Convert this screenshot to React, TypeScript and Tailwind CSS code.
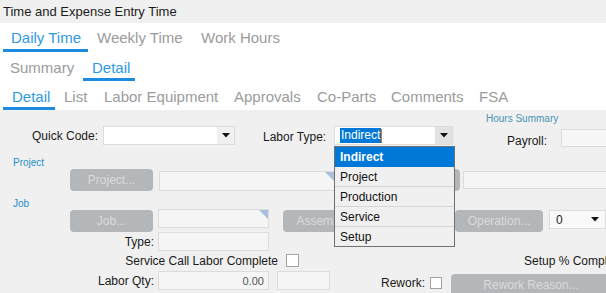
import React from "react";

const font = { fontFamily: '"Liberation Sans", Arial, sans-serif' };

function Arrow() {
  return (
    <svg width="8" height="5" viewBox="0 0 8 5">
      <path d="M0 0 L8 0 L4 4.5 Z" fill="#111" />
    </svg>
  );
}

function GrayButton({ label, className }: { label: string; className: string }) {
  return (
    <div
      className={
        "flex items-center justify-center overflow-hidden rounded-[4px] bg-[#b4b7ba] text-[12px] text-[#d9dbdd] shrink-0 " +
        className
      }
    >
      {label}
    </div>
  );
}

function Field({ className, children }: { className: string; children?: React.ReactNode }) {
  return (
    <div className={"relative shrink-0 border border-[#dcdcdc] bg-[#f5f5f5] " + className}>{children}</div>
  );
}

function Corner() {
  return (
    <svg className="absolute right-0 top-0" width="9" height="9" viewBox="0 0 9 9">
      <path d="M0 0 L9 0 L9 9 Z" fill="#a9c1dd" />
    </svg>
  );
}

function CheckBox({ className }: { className: string }) {
  return <div className={"shrink-0 border border-[#a3a3a3] bg-white " + className} />;
}

export default function App() {
  const active = "shrink-0 text-[#2e99e6] border-b-[3px] border-[#1c8be0]";
  const idle = "shrink-0 text-[#9b9b9b] border-b-[3px] border-transparent";
  return (
    <div className="w-[606px] h-[293px] overflow-hidden bg-white relative text-[#1a1a1a]" style={font}>
      {/* Title */}
      <div className="h-[23px] bg-[#f0f0f0] flex items-center pl-[3px] text-[13px] text-[#1c1c1c]">
        Time and Expense Entry Time
      </div>

      {/* Tabs */}
      <div className="text-[15px] leading-[18px]">
        <div className="flex ml-[3px] whitespace-nowrap">
          <div className={"pt-[6px] pb-[2px] pl-[8px] w-[85px] " + active}>Daily Time</div>
          <div className={"pt-[6px] pb-[2px] pl-[9px] w-[104px] " + idle}>Weekly Time</div>
          <div className={"pt-[6px] pb-[2px] pl-[9px] " + idle}>Work Hours</div>
        </div>
        <div className="flex ml-[1px] whitespace-nowrap">
          <div className={"pt-[7px] pb-[1px] pl-[9px] w-[82px] " + idle}>Summary</div>
          <div className={"pt-[7px] pb-[1px] pl-[9px] w-[52px] " + active}>Detail</div>
        </div>
        <div className="flex ml-[3px] whitespace-nowrap">
          <div className={"pt-[7px] pb-[1px] pl-[9px] w-[52px] " + active}>Detail</div>
          <div className={"pt-[7px] pb-[1px] pl-[9px] w-[40px] " + idle}>List</div>
          <div className={"pt-[7px] pb-[1px] pl-[9px] w-[130px] " + idle}>Labor Equipment</div>
          <div className={"pt-[7px] pb-[1px] pl-[9px] w-[83px] " + idle}>Approvals</div>
          <div className={"pt-[7px] pb-[1px] pl-[9px] w-[74px] " + idle}>Co-Parts</div>
          <div className={"pt-[7px] pb-[1px] pl-[9px] w-[88px] " + idle}>Comments</div>
          <div className={"pt-[7px] pb-[1px] pl-[9px] " + idle}>FSA</div>
        </div>
      </div>

      {/* Form */}
      <div className="bg-[#f0f0f0] h-[183px] text-[12px] leading-[14px] whitespace-nowrap">
        {/* Row 1 */}
        <div className="flex items-start h-[40px]">
          <div className="mt-[16px] flex items-center shrink-0">
            <div className="w-[98px] text-right shrink-0">Quick Code:</div>
            <div className="ml-[5px] w-[132px] h-[19px] bg-white border border-[#dcdcdc] flex justify-end shrink-0">
              <div className="w-[17px] h-full bg-[#f0f0f0] flex items-center justify-center">
                <Arrow />
              </div>
            </div>
          </div>
          <div className="mt-[16px] ml-[28px] flex items-start shrink-0">
            <div className="w-[71px] mt-[4px] shrink-0">Labor Type:</div>
            <div className="w-[119px] h-[19px] bg-white border border-[#dcdcdc] flex items-center justify-between shrink-0">
              <div className="flex items-center ml-[5px]">
                <span className="bg-[#0078d7] text-white px-[1px] leading-[15px]">Indirect</span>
                <span className="w-[1px] h-[14px] bg-[#e07020]" />
              </div>
              <div className="w-[17px] h-full bg-[#e2e2e2] flex items-center justify-center">
                <Arrow />
              </div>
            </div>
          </div>
          <div className="ml-[33px] flex flex-col shrink-0">
            <div className="mt-[3px] text-[10px] leading-[12px] text-[#4793b5]">Hours Summary</div>
            <div className="mt-[4px] flex items-start">
              <div className="ml-[21px] w-[54px] mt-[5px] shrink-0">Payroll:</div>
              <div className="w-[50px] h-[18px] bg-[#f7f7f7] border border-[#dcdcdc] shrink-0" />
            </div>
          </div>
        </div>

        {/* Project label */}
        <div className="h-[19px] pt-[7px] pl-[13px] text-[10px] leading-[12px] text-[#1f8fc7]">Project</div>
        {/* Project row */}
        <div className="flex items-start h-[22px]">
          <GrayButton label="Project..." className="ml-[70px] w-[83px] h-[22px]" />
          <Field className="ml-[6px] mt-[2px] w-[176px] h-[20px]">
            <Corner />
          </Field>
          <GrayButton label="Assembly..." className="ml-[37px] w-[88px] h-[22px]" />
          <Field className="ml-[3px] mt-[2px] h-[18px] w-[150px]" />
        </div>

        {/* Job label */}
        <div className="h-[19px] pt-[7px] pl-[13px] text-[10px] leading-[12px] text-[#1f8fc7]">Job</div>
        {/* Job row */}
        <div className="flex items-start h-[22px]">
          <GrayButton label="Job..." className="ml-[70px] w-[83px] h-[22px]" />
          <Field className="ml-[5px] -mt-[1px] w-[111px] h-[19px]">
            <Corner />
          </Field>
          <GrayButton label="Assembly..." className="ml-[14px] w-[88px] h-[22px]" />
          <GrayButton label="Operation..." className="ml-[84px] w-[88px] h-[22px]" />
          <div className="ml-[6px] w-[57px] h-[19px] shrink-0 bg-[#f9f9f9] border border-[#dcdcdc] flex items-center justify-between pl-[6px] pr-[6px]">
            <span>0</span>
            <Arrow />
          </div>
        </div>

        {/* Type row */}
        <div className="flex items-center h-[19px]">
          <div className="w-[154px] text-right shrink-0">Type:</div>
          <Field className="ml-[4px] w-[111px] h-[19px]" />
        </div>

        {/* Service row */}
        <div className="flex items-center h-[19px]">
          <div className="w-[278px] text-right shrink-0">Service Call Labor Complete</div>
          <CheckBox className="ml-[8px] w-[13px] h-[13px]" />
          <div className="ml-[225px] shrink-0">Setup % Complete:</div>
        </div>

        {/* Labor Qty row */}
        <div className="flex items-start h-[23px]">
          <div className="w-[154px] text-right mt-[4px] shrink-0">Labor Qty:</div>
          <Field className="ml-[4px] mt-[1px] w-[111px] h-[19px] flex items-center justify-end pr-[4px] text-[11px] text-[#555]">
            0.00
          </Field>
          <Field className="ml-[8px] mt-[1px] w-[53px] h-[19px]" />
          <div className="ml-[51px] w-[44px] mt-[6px] shrink-0">Rework:</div>
          <CheckBox className="ml-[5px] mt-[7px] w-[12px] h-[12px]" />
          <GrayButton label="Rework Reason..." className="ml-[9px] mt-[4px] w-[160px] h-[22px]" />
        </div>
      </div>

      {/* Dropdown overlay */}
      <div className="absolute left-[334px] top-[146px] w-[121px] border border-[#707070] bg-[#f0f0f0] text-[12px]">
        {["Indirect", "Project", "Production", "Service", "Setup"].map((item, i) => (
          <div
            key={item}
            className={
              i === 0
                ? "h-[20px] pl-[5px] flex items-center bg-[#0078d7] text-white font-bold"
                : i === 4
                ? "h-[19px] pl-[5px] flex items-center text-[#111]"
                : "h-[20px] pl-[5px] flex items-center text-[#111] border-b border-[#d6d6d6]"
            }
          >
            {item}
          </div>
        ))}
      </div>
    </div>
  );
}
